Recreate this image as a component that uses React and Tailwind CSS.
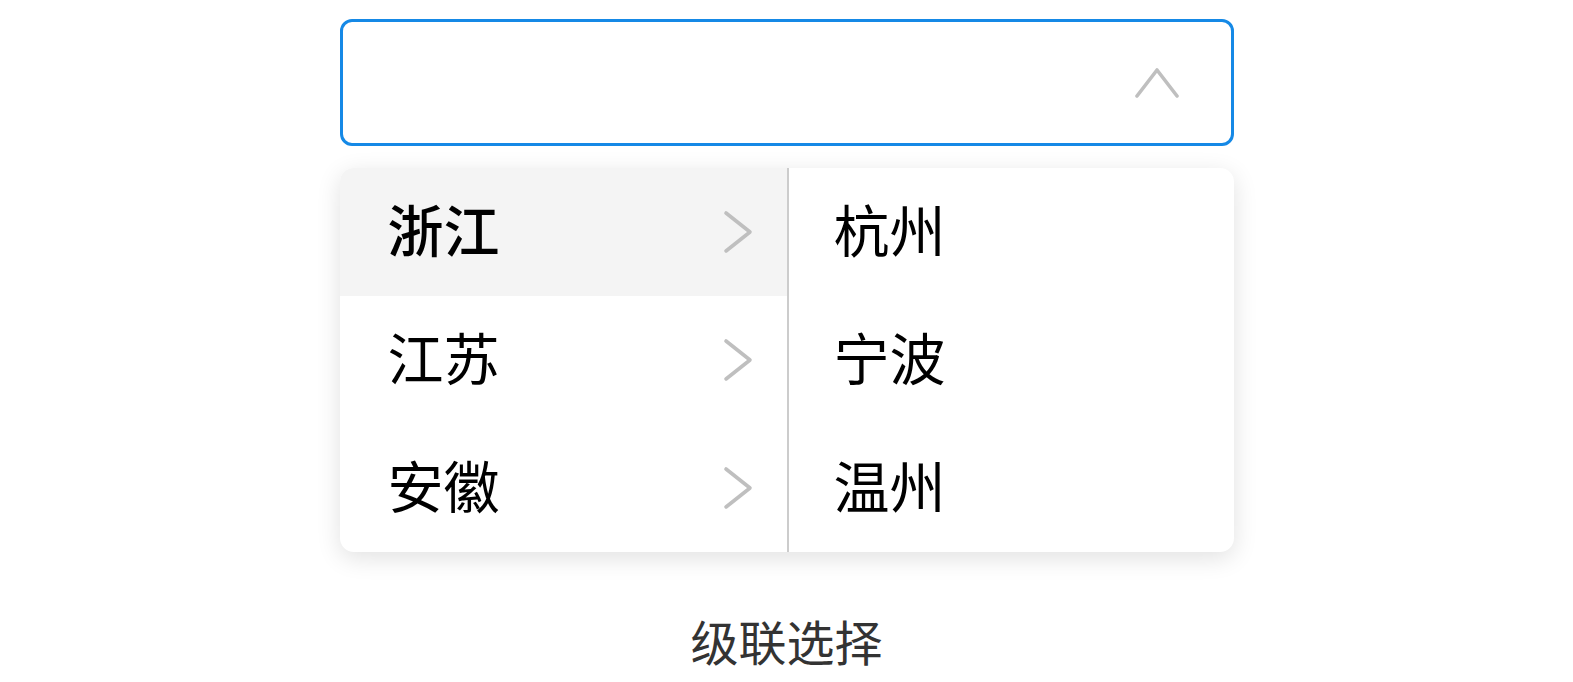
export default function App() {
  const provinces = ["浙江", "江苏", "安徽"];
  const cities = ["杭州", "宁波", "温州"];
  const font = { fontFamily: '"Noto Sans CJK SC", "Noto Sans", sans-serif' };
  return (
    <div className="w-full min-h-[682px] bg-white flex flex-col items-center" style={font}>
      <div className="w-[894px] mt-[19px] h-[127px] border-[3.5px] border-[#1589e6] rounded-[12px] flex items-center justify-end pr-[52px]">
        <svg width="44" height="32" viewBox="0 0 44 32" fill="none" className="mt-[1px]">
          <path d="M2 29 L22 3 L42 29" stroke="#bfbfbf" strokeWidth="3.6" strokeLinecap="round" strokeLinejoin="round" />
        </svg>
      </div>
      <div className="w-[894px] mt-[22px] bg-white rounded-[14px] shadow-[0_6px_24px_rgba(0,0,0,0.12)] flex overflow-hidden">
        <div className="w-[447px] flex flex-col">
          {provinces.map((p, i) => (
            <div
              key={p}
              className={`h-[128px] flex items-center justify-between pl-[48px] pr-[34px] ${i === 0 ? "bg-[#f4f4f4]" : ""}`}
            >
              <span className={`text-[56px] leading-none text-black mb-[8px] ${i === 0 ? "font-medium" : "font-normal"}`}>{p}</span>
              <svg width="30" height="44" viewBox="0 0 30 44" fill="none">
                <path d="M3 3 L27 22 L3 41" stroke="#bfbfbf" strokeWidth="3.6" strokeLinecap="round" strokeLinejoin="round" />
              </svg>
            </div>
          ))}
        </div>
        <div className="w-[2px] bg-[#cccccc]" />
        <div className="flex-1 flex flex-col">
          {cities.map((c) => (
            <div key={c} className="h-[128px] flex items-center pl-[45px]">
              <span className="text-[56px] leading-none text-black mb-[8px]">{c}</span>
            </div>
          ))}
        </div>
      </div>
      <div className="mt-[64px] text-[48px] leading-none text-[#333333]">级联选择</div>
    </div>
  );
}
